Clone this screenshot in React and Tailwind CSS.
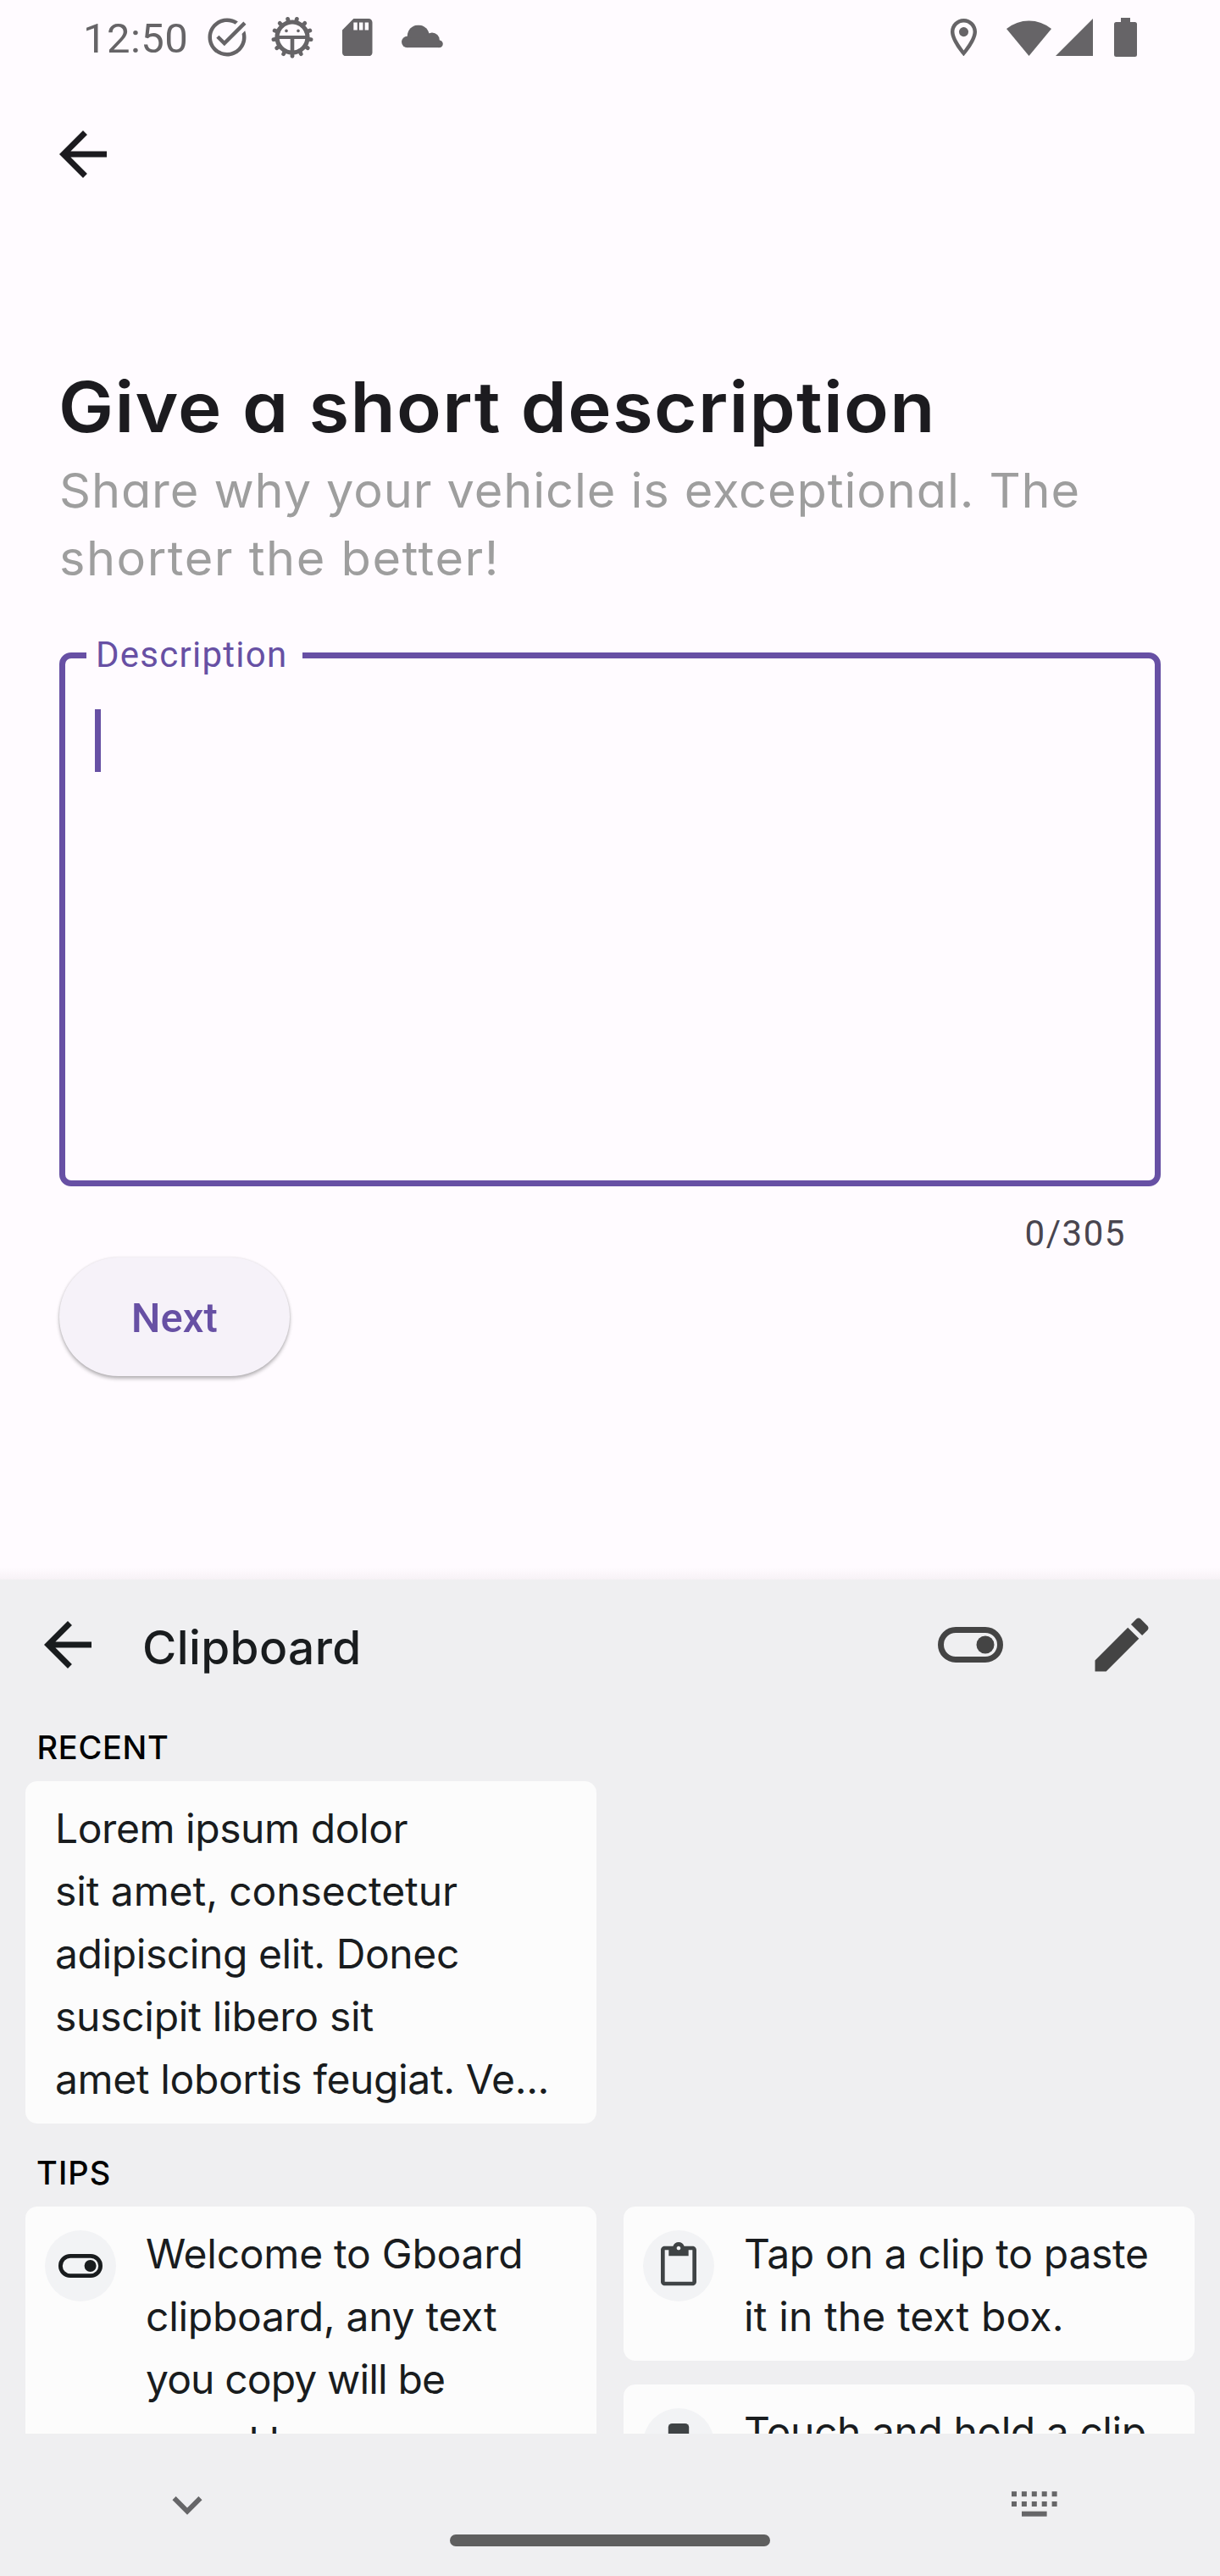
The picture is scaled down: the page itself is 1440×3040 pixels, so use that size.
function BackArrow({ className }) {
  return (
    <svg viewBox="0 0 24 24" className={className} fill="currentColor">
      <path d="M20 11H7.83l5.59-5.59L12 4l-8 8 8 8 1.41-1.41L7.83 13H20v-2z" />
    </svg>
  );
}

function GearBugIcon() {
  const teeth = Array.from({ length: 13 }, (_, i) => 180 + (i * 360) / 13);
  return (
    <svg viewBox="-25 -25 50 50" className="ml-[25px] h-[50px] w-[50px] shrink-0" fill="none" stroke="currentColor">
      <circle r="18" strokeWidth="5.2" />
      {teeth.map((a) => (
        <line key={a} y1="-18" y2="-22.3" strokeWidth="4.8" strokeLinecap="round" transform={`rotate(${a})`} />
      ))}
      <path d="M-17 0H17" strokeWidth="4" />
      <path d="M0 0V17" strokeWidth="4.6" />
      <g fill="currentColor" stroke="none">
        <circle cx="-7" cy="-7.6" r="1.8" />
        <circle cx="7" cy="-7.6" r="1.8" />
      </g>
    </svg>
  );
}

function StatusBar() {
  return (
    <div className="flex h-[88px] shrink-0 items-center pr-[98px] pl-[98px] text-[#666467]">
      <span className="w-[142.5px] shrink-0 pt-[4px] font-[Roboto,sans-serif] text-[49px] leading-[60px] tracking-[0.45px]">12:50</span>
      <svg viewBox="0 0 24 24" className="h-[54px] w-[54px] shrink-0" fill="currentColor">
        <path d="M22 5.18L10.59 16.6l-4.24-4.24 1.41-1.41 2.83 2.83 10-10L22 5.18zm-2.21 5.04c.13.57.21 1.17.21 1.78 0 4.42-3.58 8-8 8s-8-3.58-8-8 3.58-8 8-8c1.58 0 3.04.46 4.28 1.25l1.44-1.44A9.9 9.9 0 0 0 12 2C6.48 2 2 6.48 2 12s4.48 10 10 10 10-4.48 10-10c0-1.19-.22-2.33-.6-3.39l-1.61 1.61z" />
      </svg>
      <GearBugIcon />
      <svg viewBox="4 2 16 20" className="ml-[34.5px] h-[44.5px] w-[35.5px] shrink-0" fill="currentColor">
        <path d="M18 2h-8L4 8v12c0 1.1.9 2 2 2h12c1.1 0 2-.9 2-2V4c0-1.1-.9-2-2-2zm-6 6h-2V4h2v4zm3 0h-2V4h2v4zm3 0h-2V4h2v4z" />
      </svg>
      <svg viewBox="0 0 49 27" className="ml-[34.5px] h-[27px] w-[49px] shrink-0 -translate-y-[1.5px]" fill="currentColor">
        <circle cx="19.8" cy="13" r="13" />
        <circle cx="6.7" cy="20" r="6.7" />
        <circle cx="36" cy="17.8" r="8.8" />
        <circle cx="44.4" cy="22.3" r="4.4" />
        <path d="M6.7 15h34l3.7 5v6.7H6.7z" />
      </svg>

      <svg viewBox="5 2 14 20" className="ml-auto h-[44.5px] w-[31px] shrink-0" fill="currentColor">
        <path d="M12 2C8.13 2 5 5.13 5 9c0 5.25 7 13 7 13s7-7.75 7-13c0-3.87-3.13-7-7-7zM7 9c0-2.76 2.24-5 5-5s5 2.24 5 5c0 2.88-2.88 7.19-5 9.88C9.92 16.21 7 11.85 7 9z" />
        <circle cx="12" cy="9" r="2.5" />
      </svg>
      <svg viewBox="0 0 53 44" className="ml-[35.5px] h-[44px] w-[53px] shrink-0" fill="currentColor">
        <path d="M26.5 44L0 12A42 42 0 0 1 53 12z" />
      </svg>
      <svg viewBox="0 0 44 44" className="ml-[5px] h-[44px] w-[44px] shrink-0" fill="currentColor">
        <path d="M44 0V44H0z" />
      </svg>
      <svg viewBox="0 0 27 46" className="ml-[25px] h-[46px] w-[27px] shrink-0" fill="currentColor">
        <path d="M8 0h11v5h5.5a2.5 2.5 0 0 1 2.5 2.5v36a2.5 2.5 0 0 1-2.5 2.5h-22a2.5 2.5 0 0 1-2.5-2.5v-36a2.5 2.5 0 0 1 2.5-2.5H8z" />
      </svg>
    </div>
  );
}

function TipCard({ icon, height, children }) {
  return (
    <div className={`flex items-start rounded-[14px] bg-[#fcfcfc] pl-[23px] ${height}`}>
      <div className="mt-[28px] flex h-[84px] w-[84px] shrink-0 items-center justify-center rounded-full bg-[#f2f3f5]">{icon}</div>
      <div className="ml-[35px] pt-[18.5px] text-[48px] leading-[74px] whitespace-nowrap text-[#191c1e]">{children}</div>
    </div>
  );
}

function Clipboard() {
  return (
    <section className="flex h-[1176px] shrink-0 flex-col bg-[#efeff1] font-[Inter,sans-serif]">
      <header className="flex h-[119px] shrink-0 items-center pt-[35px] pr-[74.5px] pl-[38px]">
        <BackArrow className="h-[84px] w-[84px] text-[#191c1e]" />
        <h2 className="ml-[46px] pt-[6px] text-[55px] leading-[66px] font-medium tracking-[0.37px] text-[#191c1e]">Clipboard</h2>
        <svg viewBox="0 0 77 42" className="ml-auto h-[42px] w-[77px]" fill="none">
          <rect x="3.5" y="3.5" width="70" height="35" rx="17.5" stroke="#444444" strokeWidth="7" />
          <circle cx="56" cy="21" r="10.5" fill="#444444" />
        </svg>
        <svg viewBox="0 0 24 24" className="ml-[98px] h-[84px] w-[84px]" fill="#444444">
          <path d="M3 17.25V21h3.75L17.81 9.94l-3.75-3.75L3 17.25zM20.71 7.04c.39-.39.39-1.02 0-1.41l-2.34-2.34c-.39-.39-1.02-.39-1.41 0l-1.83 1.83 3.75 3.75 1.83-1.83z" />
        </svg>
      </header>

      <div className="h-[889px] shrink-0 overflow-hidden px-[30px] pt-[55px]">
        <h3 className="pl-[13.5px] text-[38px] leading-[48px] font-medium tracking-[0.7px] text-black">RECENT</h3>
        <div className="mt-[16px] h-[404px] w-[674px] rounded-[14px] bg-[#fcfcfc] pt-[18.5px] pl-[35px] text-[48px] leading-[74px] whitespace-nowrap text-[#191c1e]">
          <p className="tracking-[-0.44px]">Lorem ipsum dolor</p>
          <p className="tracking-[-0.09px]">sit amet, consectetur</p>
          <p className="tracking-[-0.42px]">adipiscing elit. Donec</p>
          <p className="tracking-[-0.28px]">suscipit libero sit</p>
          <p className="tracking-[-0.38px]">amet lobortis feugiat. Ve...</p>
        </div>
        <h3 className="mt-[34px] pl-[13px] text-[38px] leading-[48px] font-medium tracking-[1.1px] text-black">TIPS</h3>
        <div className="mt-[16px] grid grid-cols-[674px_674px] items-start gap-x-[32px]">
          <TipCard
            height="h-[340px]"
            icon={
              <svg viewBox="0 0 52 28" className="h-[28px] w-[52px]" fill="none">
                <rect x="2.4" y="2.4" width="47.2" height="23.2" rx="11.6" stroke="#191c1e" strokeWidth="4.8" />
                <circle cx="37.6" cy="14" r="7" fill="#191c1e" />
              </svg>
            }
          >
            <p className="tracking-[-0.26px]">Welcome to Gboard</p>
            <p className="tracking-[-0.28px]">clipboard, any text</p>
            <p className="tracking-[-0.86px]">you copy will be</p>
            <p className="tracking-[-0.42px]">saved here</p>
          </TipCard>
          <div className="flex flex-col gap-[28px]">
            <TipCard
              height="h-[182px]"
              icon={
                <svg viewBox="0 0 24 24" className="h-[56px] w-[56px]" fill="#3f4345">
                  <path d="M19 2h-4.18C14.4.84 13.3 0 12 0c-1.3 0-2.4.84-2.82 2H5c-1.1 0-2 .9-2 2v16c0 1.1.9 2 2 2h14c1.1 0 2-.9 2-2V4c0-1.1-.9-2-2-2zm-7 0c.55 0 1 .45 1 1s-.45 1-1 1-1-.45-1-1 .45-1 1-1zm7 18H5V4h2v3h10V4h2v16z" />
                </svg>
              }
            >
              <p className="tracking-[-0.33px]">Tap on a clip to paste</p>
              <p className="tracking-[0.11px]">it in the text box.</p>
            </TipCard>
            <TipCard
              height="h-[182px]"
              icon={
                <svg viewBox="0 0 56 56" className="h-[56px] w-[56px]" fill="#3f4345">
                  <rect x="15.8" y="4" width="24.4" height="30" rx="4.5" />
                  <path d="M11 32h34v5H30.5v14h-5V37H11z" />
                </svg>
              }
            >
              <p className="tracking-[-0.45px]">Touch and hold a clip</p>
            </TipCard>
          </div>
        </div>
      </div>

      <nav className="flex flex-1 flex-col items-center pt-[49px] text-[#666668]">
        <div className="flex h-[70px] w-full shrink-0 items-center justify-between pr-[192.5px] pl-[185.7px]">
          <svg viewBox="0 0 24 24" className="h-[70px] w-[70px]" fill="currentColor">
            <path d="M16.59 8.59L12 13.17 7.41 8.59 6 10l6 6 6-6z" />
          </svg>
          <svg viewBox="0 0 54 30" className="h-[30px] w-[54px] -translate-y-px" fill="currentColor">
            {[0, 11.9, 23.8, 35.7, 47.6].map((x) => (
              <g key={x}>
                <rect x={x} y="0.2" width="6" height="6" />
                <rect x={x} y="12" width="6" height="6" />
              </g>
            ))}
            <rect x="12" y="23.7" width="29.6" height="6" />
          </svg>
        </div>
        <div className="h-[14px] w-[378px] shrink-0 rounded-full bg-[#5f5f5f]" />
      </nav>
    </section>
  );
}

export default function App() {
  return (
    <div className="flex h-[3040px] w-[1440px] flex-col overflow-hidden bg-[#fffbff]">
      <StatusBar />
      <main className="flex flex-1 flex-col items-start">
        <BackArrow className="mt-[52px] ml-[56px] h-[84px] w-[84px] shrink-0 text-[#1c1b1f]" />
        <h1 className="mt-[207px] ml-[69px] origin-left scale-x-[1.06] font-[Inter,sans-serif] text-[82px] leading-[100px] font-semibold tracking-[1.2px] whitespace-nowrap text-[#1c1b1f] [font-feature-settings:'cv11']">
          Give a short description
        </h1>
        <div className="mt-[7.6px] ml-[70px] origin-left scale-x-[1.03] font-[Inter,sans-serif] text-[56px] leading-[80px] whitespace-nowrap text-[#9e9e9e] [font-feature-settings:'cv11']">
          <p className="tracking-[0.87px]">Share why your vehicle is exceptional. The</p>
          <p className="tracking-[1.47px]">shorter the better!</p>
        </div>

        <div className="relative mt-[71.4px] ml-[70px] h-[630px] w-[1300px] shrink-0 rounded-[14px] border-[7px] border-[#6750a4] pt-[60px] pl-[35px] font-[Roboto,sans-serif]">
          <label className="absolute -top-[32px] left-[25px] h-[56px] w-[254.5px] bg-[#fffbff] pl-[11px] text-[42px] leading-[56px] tracking-[1.26px] text-[#6750a4]">
            Description
          </label>
          <div className="h-[74px] w-[7px] bg-[#6750a4]" />
        </div>
        <p className="mt-[27.6px] mr-[111px] self-end font-[Roboto,sans-serif] text-[42px] leading-[56px] tracking-[1.54px] text-[#49454f]">0/305</p>
        <button className="ml-[70px] h-[140.5px] w-[271.5px] shrink-0 rounded-full bg-[#f6f2f9] pt-[4px] font-[Roboto,sans-serif] text-[49px] font-medium text-[#6750a4] shadow-[0_3px_4px_rgba(0,0,0,0.28),0_0_3px_rgba(0,0,0,0.1)]">
          Next
        </button>
        <div className="mt-auto h-[14px] w-full bg-linear-to-b from-[#fffbff] to-[#f7f2f6]" />
      </main>
      <Clipboard />
    </div>
  );
}
